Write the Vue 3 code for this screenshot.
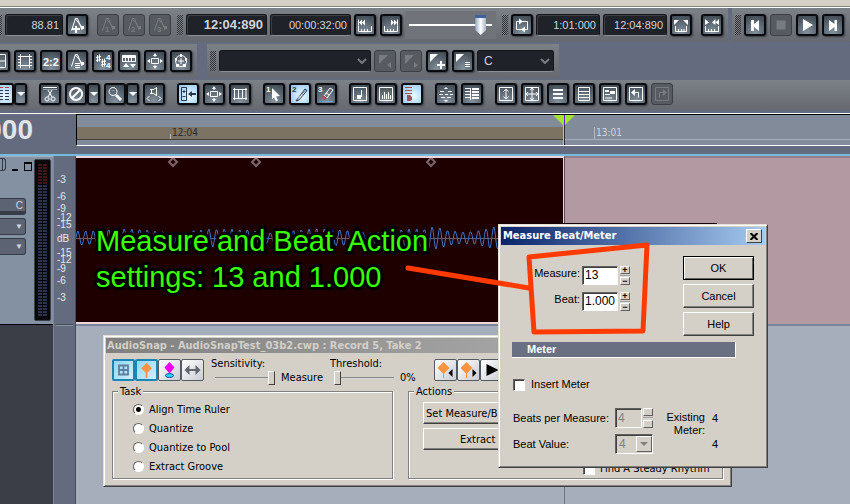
<script setup>
import { ref, h } from 'vue'

const metro = { s: 'M2.5 13.5L6.5 1.5H8.5L13 13M6 1.5L13 10', f: 'M12 9h3v3h-3z' }
const frame = 'M1.5 1.5h13v13h-13z'
const icons = {
  metroPlus: { s: metro.s, f: metro.f + 'M6 9h2v2h3v2H8v3H6v-3H3v-2h3z' },
  metro1: { ...metro, t: [['1', 5, 15]] },
  metro2: { ...metro, t: [['2', 5, 15]] },
  metro3: { ...metro, t: [['3', 5, 15]] },
  metroList: { s: metro.s + 'M6 10.5h5M6 12.5h5M6 14.5h5', f: metro.f },
  rulerBack: { s: 'M1.5 9v5.5h13V9M4.5 12v2M7.5 12v2M10.5 12v2M1.5 2.5v6', f: 'M2 5.5l3-3v6zM5 5.5l3-3v6z' },
  rulerFwd: { s: 'M1.5 9v5.5h13V9M4.5 12v2M7.5 12v2M10.5 12v2M14.5 2.5v6', f: 'M14 5.5l-3-3v6zM11 5.5l-3-3v6z' },
  loop: { s: 'M5 4.5H2.5v8H10M6 12.5M11 12.5h2.5v-8H6', f: 'M5 1.5v6l4-3zM11 9.5v6l-4-3z' },
  rulerSpan: { s: 'M2.5 9v5.5h11V9M5.5 12v2M8.5 12v2M11 12v2', f: 'M1 3h5L1 8zM15 3h-5l5 5z' },
  rulerIn: { s: 'M1.5 9v5.5h13V9M4.5 12v2M7.5 12v2M10.5 12v2', f: 'M1 2l4 3.5L1 8zM8 5.5L11.5 2v6zM11.5 5.5L15 2v6z' },
  toStart: { f: 'M4 3h3v4l5-4v11l-5-4v4H4z' },
  stop: { f: 'M3.5 3.5h9v9h-9z' },
  play: { f: 'M4 2l10 6-10 6z' },
  toEnd: { f: 'M12 3H9.5v4L4 3v11l5.5-4v4H12z' },
  grid: { s: frame + 'M8 2v12M2 8h12' },
  strip: { s: 'M1 3.5h14M1 12.5h14M3.5 3v10M12.5 3v10M1 6.5h2M1 9.5h2M13 6.5h2M13 9.5h2M3.5 1v2M12.5 1v2M3.5 13v2M12.5 13v2' },
  ratio: { t: [['2:2', 0, 13, 11]] },
  sharps: { s: 'M2.5 2v7M4.5 1.5v7M1 4.5l5-1M1 7.5l5-1M7.5 6v8M9.5 5.5v8M6 9l5-1M6 12l5-1', t: [['4', 11, 7, 8], ['4', 11, 15, 8]] },
  keys: { s: 'M1.5 2.5h13v6h-13zM4.5 5v3M7.5 5v3M10.5 5v3', f: 'M2 14l3-4 3 4zM9 11h6l-3 4zM2 3h12v2H2z' },
  spread: { s: 'M4.5 5.5h7v5h-7zM8 1v3M8 12v3M1 8h2M13 8h2', f: 'M6 3l2-3 2 3zM6 13l2 3 2-3zM3 6L0 8l3 2zM13 6l3 2-3 2z' },
  orbit: { s: 'M8 2.5a5.5 5.5 0 1 0 .1 0M8 5v6M5 8h6', f: 'M7 1h2v3H7zM2 5h2v3H2zM12 5h2v3h-2zM3 11h3v3H3zM10 11h3v3h-3z' },
  swatchPrev: { f: 'M2 2h9L2 11zM14 9v6l-4-3z' },
  swatchNext: { f: 'M2 2h9L2 11zM11 9v6l4-3z' },
  swatchAdd: { f: 'M1 1h8L1 9zM11 8h2v3h3v2h-3v3h-2v-3H8v-2h3z' },
  swatchList: { f: 'M1 1h8L1 9z', s: 'M10 9.5h5M10 11.5h5M10 13.5h5' },
  lanes: { s: 'M4 4.5h4M4 7.5h4M4 10.5h4M4 13.5h4M10 4.5h4M10 7.5h4M10 10.5h4M10 13.5h4', s2: 'M4 1.5h4M10 1.5h4' },
  cut: { s: 'M1 1.5h14M6 4l4 7M10 4l-4 7M5 11a2 2 0 1 0 .1 0M11 11a2 2 0 1 0 .1 0', g: 'M1 3.5h14' },
  mute: { s: 'M8 2a6 6 0 1 0 .1 0M12 4l-8 8', w: 2 },
  zoom: { s: 'M6 1.5a4 4 0 1 0 .1 0', f: 'M8 10l2-2 5 5-2 2z', g: 'M4.5 4.5h3' },
  scrub: { s: 'M5.5 3.5v4M4 3.5h3.5l3-2v8l-3-2H4M10.500 1v9M3.5 10L1 12.5 3.5 15M12.5 10l2.5 2.5-2.5 2.5' },
  snap: { s: 'M1.500 1.5h5v13h-5zM4 4v3M2.5 5.5h3M2.5 10.5h3', f: 'M8 8l4-3v2h4v2h-4v2z' },
  film: { s: 'M1 3.5h14M1 12.5h14M2.5 2v12M6.5 4v8M10.500 4v8M14 2v12' , s3: 1 },
  select: { f: 'M6 2l8 8-4 .5 2 4-2 1-2-4-2 2z', t: [['1', 0, 6]] },
  draw: { s: 'M5 13.5L13 3l2 1.5-8 9.5-3 1z', t: [['2', 0, 6]], g: 'M6 12l8-8' },
  erase: { s: 'M6 10L12 2l3 2-6 8zM8 7l4 2', r: 'M5 9l4 3-2 2-4-3z', t: [['3', 0, 6]], b: 'M1 15.5h2M4 15.5h2M7 15.5h8' },
  note: { s: frame + 'M9.5 4v7', f: 'M5 9h4v4H5z' },
  bars: { s: frame + 'M4.5 9v4M6.5 6v7M8.5 8v5M10.5 6v7M12.5 9v4' },
  mixLanes: { r: 'M1 1h7v1H1zM1 4h7v1H1zM1 7h7v1H1zM3 9h3l2 2v3l-2 1H3z' },
  center: { s: 'M2 5.5h4M10 5.5h4M1 8.5h4M7 8.5h3M12 8.5h3M3 11.5h4M9 11.5h4', f: 'M8 1l2 2H6zM8 16l2-2H6z' },
  brackets: { s: 'M1 2.5h6M1 5.5h6M1 8.5h6M1 11.5h6M6.5 2v12', f: 'M8 2h7v2H8zM8 5h7v2H8zM8 8h7v2H8zM8 11h7v2H8z' },
  fitV: { s: frame + 'M8 3v10M5.5 5.5L8 3l2.5 2.5M5.5 10.5L8 13l2.5-2.5' },
  fitAll: { s: frame + 'M8 2v12M2 8h12M6 4l2-2 2 2M6 12l2 2 2-2M4 6L2 8l2 2M12 6l2 2-2 2' },
  rows: { f: 'M3 3h10v2H3zM3 7h10v2H3zM3 11h10v2H3z' },
  rowsBox: { s: 'M2.5 1.5h11v13h-11zM3 5.5h10M3 8.5h10M3 11.5h10' },
  stepBox: { s: frame + 'M3 8.5h5M3 12h7', f: 'M3 4h4v2H3zM8 5h5v3H8z' },
  undo: { s: frame + 'M5 6.5h5.5v5', f: 'M3 6.5l4-3.5v7z' },
  redo: { s: frame + 'M11 6.5H5.5v5', f: 'M13 6.5L9 3v7z' },
  down: { f: 'M1 6h8l-4 4z' }
}

const Icon = (p) => {
  const i = icons[p.name]
  const parts = []
  const line = (d, c) => d && parts.push(h('path', { d, fill: 'none', stroke: c, 'stroke-width': i.w || 1 }))
  line(i.s, 'currentColor')
  line(i.g, '#8d969e')
  line(i.b, '#6ba2e0')
  line(i.s2, '#c0404a')
  if (i.f) parts.push(h('path', { d: i.f, fill: 'currentColor' }))
  if (i.r) parts.push(h('path', { d: i.r, fill: '#a8505a' }))
  for (const [c, x, y, size] of i.t || [])
    parts.push(h('text', { x, y, fill: 'currentColor', 'font-size': size || 8, 'font-weight': 700, 'font-family': 'Liberation Sans, sans-serif' }, c))
  return h('svg', { viewBox: p.name === 'down' ? '0 0 10 16' : '0 0 16 16', width: p.name === 'down' ? 10 : 16, height: 16, 'aria-hidden': 'true' }, parts)
}
Icon.props = ['name']

const viewTools = ['grid', 'strip', 'ratio', 'metroList', 'sharps', 'keys', 'spread', 'orbit']
const swatches = [['swatchPrev', 1], ['swatchNext', 1], ['swatchAdd', 0], ['swatchList', 0]]
const transport = [['toStart', 0], ['stop', 1], ['play', 0], ['toEnd', 0]]
// each tool: name, has menu, state
const editTools = [
  [['lanes', 1, 'on']],
  [['cut'], ['mute', 1], ['zoom', 1], ['scrub']],
  [['snap', 0, 'on'], ['spread'], ['film']],
  [['select'], ['draw', 0, 'on'], ['erase']],
  [['note'], ['bars'], ['mixLanes', 0, 'on']],
  [['center'], ['brackets']],
  [['fitV'], ['fitAll'], ['rows'], ['rowsBox'], ['stepBox'], ['undo'], ['redo', 0, 'off']]
]

const scale = [['-3', 24], ['-6', 41], ['-9', 53], ['-12', 62], ['-15', 69], ['dB', 83], ['-15', 97], ['-12', 104], ['-9', 113], ['-6', 125], ['-3', 142]]
const transients = [97, 180, 355]

let wave = 'M0 80'
for (let x = 1; x < 430; x++) {
  const amp = x < 24 ? 7 : x < 350 ? 5 + 4 * Math.abs(Math.sin(x / 31)) : 9 + 3 * Math.sin(x / 13)
  wave += `L${x} ${Math.round(80 - amp * Math.sin((x * Math.PI * 2) / 7.7))}`
}

const tasks = ['Align Time Ruler', 'Quantize', 'Quantize to Pool', 'Extract Groove']
const task = ref(tasks[0])
const measure = ref('13')
const beat = ref('1.000')
</script>

<template>
  <div class="app">
    <div class="menu-edge"></div>
    <header class="toolbars">
      <div class="row">
        <div class="panel tight">
          <span class="grip"></span>
          <output class="lcd tempo">88.81</output>
          <button class="tool" aria-label="Insert tempo"><Icon name="metroPlus" /></button>
          <div class="set apart">
            <button v-for="n in 3" :key="n" class="tool off" disabled :aria-label="'Tempo ' + n"><Icon :name="'metro' + n" /></button>
          </div>
          <span class="grip spaced"></span>
          <output class="lcd wide strong">12:04:890</output>
          <output class="lcd wide">00:00:32:00</output>
          <div class="set">
            <button class="tool" aria-label="Rewind"><Icon name="rulerBack" /></button>
            <button class="tool" aria-label="Forward"><Icon name="rulerFwd" /></button>
          </div>
          <input class="position" type="range" value="92" aria-label="Position" />
          <span class="grip spaced"></span>
          <button class="tool" aria-label="Loop"><Icon name="loop" /></button>
          <output class="lcd mid">1:01:000</output>
          <output class="lcd mid">12:04:890</output>
          <button class="tool" aria-label="Set loop"><Icon name="rulerSpan" /></button>
          <button class="tool apart" aria-label="Punch"><Icon name="rulerIn" /></button>
        </div>
        <div class="panel grow">
          <span class="grip"></span>
          <div class="set">
            <button v-for="[n, off] in transport" :key="n" class="tool" :class="{ off }" :disabled="!!off" :aria-label="n"><Icon :name="n" /></button>
          </div>
        </div>
      </div>
      <div class="row second">
        <div class="panel cut">
          <div class="set">
            <button v-for="n in viewTools" :key="n" class="tool" :aria-label="n"><Icon :name="n" /></button>
          </div>
        </div>
        <div class="panel">
          <span class="grip"></span>
          <div class="pick long">
            <select aria-label="Marker"><option></option></select>
            <svg viewBox="0 0 10 6" width="10" height="6"><path d="M1 1l4 4 4-4" /></svg>
          </div>
          <div class="set">
            <button v-for="[n, off] in swatches" :key="n" class="tool" :class="{ off }" :disabled="!!off" :aria-label="n"><Icon :name="n" /></button>
          </div>
          <div class="pick short">
            <select aria-label="Key"><option>C</option></select>
            <svg viewBox="0 0 10 6" width="10" height="6"><path d="M1 1l4 4 4-4" /></svg>
          </div>
        </div>
      </div>
      <div class="row">
        <div class="panel grow edit">
          <div v-for="(g, gi) in editTools" :key="gi" class="set">
            <div v-for="[n, menu, state] in g" :key="n" class="pair">
              <button class="tool" :class="state" :disabled="state === 'off'" :aria-label="n"><Icon :name="n" /></button>
              <button v-if="menu" class="tool slim" :aria-label="n + ' menu'"><Icon name="down" /></button>
            </div>
          </div>
        </div>
      </div>
    </header>

    <div class="timeline">
      <div class="now">000</div>
      <div class="ruler">
        <div class="band upper"></div>
        <div class="band beats">
          <span class="past"><i></i>12:04</span>
          <span class="next"><i></i>13:01</span>
        </div>
        <div class="band lower"></div>
        <svg class="head" viewBox="0 0 22 30" width="22" height="30"><path d="M0 0h22L11 11z" fill="#a4e234" /><path d="M11.5 0v10" stroke="#5a20e0" /><path d="M10.5 10v20" stroke="#a4e234" /><path d="M11.5 10v20" stroke="#2a3038" /></svg>
      </div>
    </div>

    <main class="workspace">
      <aside class="strip">
        <div class="track">
          <div class="controls">
            <div class="caps"><span class="stub"></span><span class="min"></span><span class="max"></span></div>
            <button class="slot c">C</button>
            <button class="slot">▼</button>
            <button class="slot">▼</button>
          </div>
          <div class="meter"><span></span><span></span></div>
        </div>
      </aside>
      <div class="scale">
        <span v-for="([t, y], i) in scale" :key="i" :style="{ top: y + 'px' }">{{ t }}</span>
      </div>
      <section class="clips">
        <div class="lane">
          <div class="clip">
            <svg width="486" height="162" viewBox="0 0 486 162">
              <path d="M0 80.5H486" stroke="#6b5a5e" />
              <path :d="wave" fill="none" stroke="#3a70c4" />
              <path v-for="x in transients" :key="x" :d="`M${x} 0l4 4-4 4-4-4z`" fill="none" stroke="#80626a" stroke-width="2" />
            </svg>
          </div>
          <div class="rest"></div>
        </div>
        <div class="empty"></div>
      </section>

      <section class="window snap">
        <h2>AudioSnap - AudioSnapTest_03b2.cwp : Record 5, Take 2</h2>
        <div class="snap-tools">
          <div class="flat-set">
            <button class="flat on" aria-label="Grid"><svg viewBox="0 0 20 20"><path d="M5 5h10v10H5zM10 5v10M5 10h10" fill="none" stroke="#5f7f9e" stroke-width="2" /></svg></button>
            <button class="flat on" aria-label="Marker"><svg viewBox="0 0 20 20"><path d="M10 2l6 6-6 6-6-6z" fill="#fa9440" /><path d="M10 13v6" stroke="#fa9440" stroke-width="2" /></svg></button>
            <button class="flat" aria-label="Pool"><svg viewBox="0 0 20 20"><ellipse cx="10" cy="15.5" rx="4" ry="2" fill="#20d8f8" stroke="#224a9c" /><path d="M10 2l5 5.5-5 6-5-6z" fill="#f000f0" /></svg></button>
            <button class="flat" aria-label="Stretch"><svg viewBox="0 0 20 20"><path d="M2 10l5-5v4h6V5l5 5-5 5v-4H7v4z" fill="#62666e" /></svg></button>
          </div>
          <div class="knob">
            <label for="sens">Sensitivity:</label>
            <div><input id="sens" type="range" value="100" /><span>Measure</span></div>
          </div>
          <div class="knob">
            <label for="thr">Threshold:</label>
            <div><input id="thr" type="range" value="0" /><span>0%</span></div>
          </div>
          <div class="flat-set far">
            <button class="flat" aria-label="Previous"><svg viewBox="0 0 20 20"><path d="M8 2l6 6-6 6-6-6z" fill="#fa9440" /><path d="M8 12v6" stroke="#fa9440" /><path d="M17 9v8l-4-4z" /></svg></button>
            <button class="flat" aria-label="Next"><svg viewBox="0 0 20 20"><path d="M8 2l6 6-6 6-6-6z" fill="#fa9440" /><path d="M8 12v6" stroke="#fa9440" /><path d="M14 9v8l4-4z" /></svg></button>
            <button class="flat" aria-label="Play"><svg viewBox="0 0 20 20"><path d="M5 4l12 6-12 6z" /></svg></button>
          </div>
        </div>
        <div class="groups">
          <fieldset class="task">
            <legend>Task</legend>
            <label v-for="t in tasks" :key="t"><input v-model="task" type="radio" name="task" :value="t" />{{ t }}</label>
          </fieldset>
          <fieldset class="actions">
            <legend>Actions</legend>
            <button class="push">Set Measure/B</button>
            <button class="push inset">Extract</button>
            <label class="steady"><input type="checkbox" class="box" />Find A Steady Rhythm</label>
          </fieldset>
        </div>
      </section>

      <div class="shade"></div>
      <section class="window dialog" role="dialog" aria-labelledby="dlg">
        <div class="caption">
          <h2 id="dlg">Measure Beat/Meter</h2>
          <button class="close" aria-label="Close"><svg viewBox="0 0 8 7" width="8" height="7"><path d="M.5 0l7 7M7.5 0l-7 7" stroke="#000" stroke-width="2" /></svg></button>
        </div>
        <div class="top">
          <div class="fields">
            <label for="m">Measure:</label>
            <input id="m" v-model="measure" type="text" />
            <span class="spin"><button aria-label="Measure up">+</button><button aria-label="Measure down">−</button></span>
            <label for="b">Beat:</label>
            <input id="b" v-model="beat" type="text" />
            <span class="spin"><button aria-label="Beat up">+</button><button aria-label="Beat down">−</button></span>
          </div>
          <div class="answers">
            <button class="push default">OK</button>
            <button class="push">Cancel</button>
            <button class="push">Help</button>
          </div>
        </div>
        <h3>Meter</h3>
        <label class="insert"><input type="checkbox" class="box" />Insert Meter</label>
        <div class="meter-form">
          <label for="bpm">Beats per Measure:</label>
          <div class="with-spin">
            <input id="bpm" type="text" value="4" disabled />
            <span class="spin dim"><button disabled aria-label="Up"></button><button disabled aria-label="Down"></button></span>
          </div>
          <span class="existing">Existing<br />Meter:</span>
          <span class="val">4</span>
          <label for="bv">Beat Value:</label>
          <div class="drop">
            <select id="bv" disabled><option>4</option></select>
            <span><svg viewBox="0 0 8 4" width="8" height="4"><path d="M0 0h8L4 4z" fill="#808080" /></svg></span>
          </div>
          <span class="val">4</span>
        </div>
      </section>

      <p class="note">Measure and Beat&nbsp; Action<br />settings: 13 and 1.000</p>
      <svg class="pointer" viewBox="0 0 260 100" width="260" height="100">
        <path d="M8 28L129 48M129 17L247 5 243 91 134 92z" />
      </svg>
    </main>
  </div>
</template>

<style>
body { background: #656b7f; }
</style>

<style scoped>
* { box-sizing: border-box; }
.app {
  --face: #d4d0c8;
  --base: #656b7f;
  --tahoma: "DejaVu Sans Condensed", "Noto Sans", sans-serif;
  display: flex;
  flex-direction: column;
  min-height: 100vh;
  overflow: hidden;
  background: var(--base);
  font: 11px/13px "Liberation Sans", sans-serif;
}
button, input, select, output { font: inherit; margin: 0; }
button { padding: 0; }
h2, h3, p { margin: 0; font-size: inherit; }
.menu-edge { height: 8px; background: var(--face); border-bottom: 1px solid #fff; box-shadow: inset 0 -1px #86847c; }

.toolbars { display: flex; flex-direction: column; gap: 2px; padding-bottom: 3px; border-bottom: 1px solid #fff; }
.row { display: flex; gap: 4px; }
.row.second { gap: 10px; }
.panel { display: flex; align-items: center; gap: 3px; padding: 6px 5px 6px 3px; background: linear-gradient(#7c8087, #666970); flex-shrink: 0; }
.panel.tight { padding-left: 0; }
.panel.tight > .grip:first-child { width: 2px; }
.panel.grow { flex: 1 0 auto; }
.panel.cut { margin-left: -12px; padding-left: 0; }
.panel.edit { gap: 12px; padding: 3px 0 5px; margin-left: -8px; }
.set { display: flex; gap: 4px; }
.pair { display: flex; }
.apart { margin-left: 6px; }
.grip { width: 6px; height: 20px; background: repeating-conic-gradient(#1a1c20 0 25%, #868a90 0 50%) 0 0 / 2px 2px; opacity: .8; }
.grip.spaced { margin-left: 3px; }
.tool { display: grid; place-items: center; width: 22px; height: 22px; flex-shrink: 0; color: #fff; border: 2px solid #090b0e; border-radius: 3px; background: radial-gradient(circle at 50% 90%, #84929d, #5a6671 55%, #3d464f); box-shadow: 1px 1px 2px #3a3d44; }
.tool svg { display: block; }
.tool.slim { width: 13px; }
.tool.on { color: #26384a; background: radial-gradient(circle at 60% 60%, #eef9ff, #8fc3ee); }
.tool.off { color: #777b82; border: 1px solid #3c3f45; background: #575a61; box-shadow: none; }
.lcd { height: 22px; padding: 0 3px; color: #d0d4dc; text-align: right; font: 11px/20px "Liberation Sans", sans-serif; background: #202229; border: 1px solid #14161a; border-bottom-color: #8a8e95; border-radius: 3px; box-shadow: inset 1px 1px 0 #3b3e45; }
.tempo { width: 58px; }
.wide { width: 81px; }
.strong { font: bold 13px/20px "Liberation Sans", sans-serif; }
.mid { width: 64px; }
.position { appearance: none; width: 91px; height: 28px; margin: -3px 0; padding: 0 4px; background: #707379; }
.position::-webkit-slider-runnable-track { height: 20px; background: linear-gradient(#fff, #fff) 0 9px / 100% 2px no-repeat; }
.position::-webkit-slider-thumb { appearance: none; width: 11px; height: 20px; background: linear-gradient(90deg, #8fa4bc, #fff 50%, #a8b6c6); border-top: 3px solid #3d64a0; clip-path: polygon(0 0, 100% 0, 100% 75%, 50% 100%, 0 75%); }
.pick { display: grid; align-items: center; }
.pick > * { grid-area: 1 / 1; }
.pick svg { justify-self: end; margin-right: 4px; fill: none; stroke: #777b84; stroke-width: 2; pointer-events: none; }
.pick select { appearance: none; width: 100%; height: 22px; padding: 0 6px; color: #d0d4dc; font: 12px/18px "Liberation Sans", sans-serif; background: #202229; border: 1px solid #14161a; border-bottom-color: #8a8e95; border-radius: 3px; }
.long { width: 152px; }
.short { width: 77px; }

.timeline { display: grid; grid-template-columns: 76px 1fr; height: 42px; border-bottom: 2px solid #76bcdc; flex-shrink: 0; }
.now { display: flex; justify-content: flex-end; color: #e2e4ea; font: bold 28px/32px "Liberation Sans", sans-serif; padding-right: 43px; }
.ruler { position: relative; align-self: start; display: flex; flex-direction: column; border: solid #000; border-width: 1px 0 1px 1px; border-bottom-color: #fff; background: #828b99; font: 10px/12px var(--tahoma); }
.upper { height: 12px; }
.lower { height: 5px; }
.beats { display: flex; height: 13px; }
.beats span { display: flex; }
.past { width: 486px; padding-left: 93px; color: #2c2926; background: #7c7362; border-bottom: 1px solid #45413a; }
.next { flex: 1; padding-left: 31px; color: #d0d5dd; border-bottom: 1px solid #a6afbb; }
.beats i { width: 1px; margin-right: 1px; background: #b5bac2; }
.past i { margin-top: 7px; }
.head { position: absolute; left: 476px; top: 0; }

.workspace { position: relative; flex: 1; display: grid; grid-template-columns: 53px 23px 1fr; min-height: 348px; }
.strip { background: #3b3e46; }
.track { display: flex; justify-content: space-between; height: 169px; padding: 2px 2px 0 0; background: #8391a3; border-bottom: 1px solid #000; border-top: 1px solid #a5afbb; }
.controls { width: 32px; }
.caps { display: flex; align-items: flex-end; height: 12px; gap: 6px; }
.stub { width: 6px; height: 13px; border: 1px solid #333944; border-left: 0; border-radius: 0 3px 3px 0; background: repeating-linear-gradient(90deg, #8391a3 0 2px, #333944 2px 3px); }
.min { width: 6px; height: 2px; background: #000; }
.max { width: 8px; height: 9px; border: 1px solid #000; border-top-width: 2px; }
.slot { display: block; width: 26px; height: 17px; margin-bottom: 3px; padding-right: 2px; text-align: right; font-size: 8px; color: #d3d7de; background: #5c6473; border: 1px solid #363b46; border-left: 0; border-radius: 0 3px 3px 0; }
.slot.c { margin-top: 27px; font-size: 10px; border-bottom-width: 4px; line-height: 9px; }
.meter { display: flex; gap: 1px; width: 17px; height: 162px; padding: 4px 3px; background: #07080c; border: 1px solid #3c4048; border-radius: 2px; }
.meter span { flex: 1; background: repeating-linear-gradient(transparent 0 2px, #07080c 2px 3px), linear-gradient(#451418 0 20px, #2a3350 20px); }
.scale { position: relative; border: solid #7d8798; border-width: 0 1px; border-right-color: #474b5c; }
.scale::after { content: ""; position: absolute; left: 2px; right: 2px; top: 168px; height: 2px; background: linear-gradient(#474b5c 50%, #8d94a4 50%); }
.scale span { position: absolute; left: 3px; color: #e4e6ea; font: 10px/12px "Liberation Sans", sans-serif; margin-top: -6px; }
.clips { display: flex; flex-direction: column; background: #a6aebb; min-width: 0; }
.lane { display: flex; height: 170px; border-bottom: 2px solid #77869a; }
.clip { width: 488px; flex-shrink: 0; background: #1e0000; border: solid #f1d4d8; border-width: 2px 1px 2px 0; }
.clip svg { display: block; }
.rest { flex: 1; background: #b399a1; border-left: 1px solid #5c4a58; border-top: 2px solid #917f8b; }
.empty { flex: 1; margin-left: 488px; border-left: 1px solid #6a7688; }

.window { position: absolute; background: var(--face); border: 1px solid; border-color: #e4e0d8 #404040 #404040 #e4e0d8; box-shadow: inset 1px 1px #fff, inset -1px -1px #808080; padding: 2px; }
.snap { left: 103px; top: 179px; width: 629px; height: 152px; font: 11px/13px var(--tahoma); }
.snap h2 { height: 15px; padding-left: 1px; color: #d4d0c8; font: bold 11px/15px var(--tahoma); background: linear-gradient(90deg, #808080, #b8b8b8); }
.snap-tools { display: flex; align-items: flex-start; padding: 4px 6px 0; }
.flat-set { display: flex; padding-top: 2px; }
.flat { width: 23px; height: 22px; border: 1px solid #545a64; border-radius: 2px; background: linear-gradient(135deg, #fff, #c9ccd4); }
.flat.on { border: 2px solid #1a84b4; background: linear-gradient(135deg, #8cd8fa, #d3effb); }
.flat svg { display: block; width: 100%; height: 100%; }
.knob { width: 119px; padding-left: 7px; }
.knob div { display: flex; align-items: center; gap: 6px; }
.knob input { appearance: none; width: 60px; height: 15px; margin-left: 4px; background: linear-gradient(#606060, #fff) 0 7px / 100% 2px no-repeat; }
.knob input::-webkit-slider-thumb { appearance: none; width: 7px; height: 14px; background: var(--face); border: 1px solid; border-color: #fff #404040 #404040 #fff; }
.far { margin-left: -8px; }
.groups { display: flex; gap: 15px; padding: 0 6px; }
fieldset { min-width: 0; margin: 0; height: 94px; padding: 0 14px; border: 1px solid #808080; box-shadow: inset 1px 1px #fff, 1px 1px #fff; }
legend { padding: 0 2px; margin-left: -9px; background: var(--face); }
.task { width: 281px; }
.task label { display: flex; align-items: center; gap: 5px; height: 19px; margin: 0 0 0 6px; }
.task legend + label { margin-top: 2px; }
.task input { appearance: none; width: 11px; height: 11px; border: 1px solid; border-color: #606060 #fff #fff #606060; border-radius: 50%; background: #fff; }
.task input:checked { background: radial-gradient(circle, #000 0 2px, #fff 3px); }
.actions { width: 315px; }
.push { display: block; border: 1px solid; border-color: #fff #404040 #404040 #fff; background: var(--face); box-shadow: inset -1px -1px #808080; color: #000; }
.actions .push { width: 200px; height: 22px; margin: 4px 0 0; padding-left: 2px; text-align: left; }
.actions .push.inset { padding-left: 36px; }
.box { appearance: none; width: 12px; height: 12px; flex-shrink: 0; background: #fff; border: 1px solid; border-color: #606060 #fff #fff #606060; box-shadow: inset 1px 1px #404040; }
.steady { display: flex; align-items: center; gap: 5px; margin: 12px 0 0 160px; white-space: nowrap; }

.shade { position: absolute; left: 497px; top: 67px; width: 220px; height: 1px; background: #140004; }
.dialog { left: 498px; top: 68px; width: 270px; height: 244px; }
.caption { display: flex; align-items: center; justify-content: space-between; height: 18px; padding: 0 3px 0 2px; background: linear-gradient(90deg, #0a246a, #a6caf0); }
.caption h2 { color: #fff; font: bold 11px/18px var(--tahoma); }
.close { display: grid; place-items: center; width: 16px; height: 14px; background: var(--face); border: 1px solid; border-color: #fff #404040 #404040 #fff; }
.top { display: flex; justify-content: space-between; padding: 11px 11px 0 0; }
.fields { display: grid; grid-template-columns: 79px 36px 10px; grid-auto-rows: 19px; gap: 7px 2px; padding-top: 10px; }
.fields label { text-align: right; padding-top: 1px; }
.fields label + input, .with-spin input { width: 100%; padding: 0 2px; background: #fff; border: 1px solid; border-color: #606060 #fff #fff #606060; box-shadow: inset 1px 1px #404040; font-size: 12px; }
.spin { display: flex; flex-direction: column; justify-content: space-between; background: linear-gradient(#808080, #fff) 0 9px / 100% 2px no-repeat; }
.spin button { height: 8px; font: bold 9px/6px "Liberation Sans", sans-serif; border: 1px solid; border-color: #fff #606060 #606060 #fff; background: var(--face); }
.spin.dim { margin-left: 1px; }
.answers { display: flex; flex-direction: column; gap: 4px; }
.answers .push { width: 71px; height: 24px; }
.answers .default { border-color: #000; box-shadow: inset 1px 1px #fff, inset -1px -1px #606060; }
.dialog h3 { height: 16px; margin: 6px 29px 0 11px; padding-left: 15px; color: #fff; background: #697081; border-right: 1px solid #fff; border-bottom: 1px solid #fff; font: bold 11px/15px "Liberation Sans", sans-serif; }
.insert { display: flex; align-items: center; gap: 6px; margin: 20px 0 0 12px; }
.meter-form { display: grid; grid-template-columns: 102px 38px 53px 20px; grid-template-rows: 20px 20px; row-gap: 6px; align-items: center; padding: 17px 0 0 12px; }
.with-spin { display: grid; grid-template-columns: 27px 11px; }
.meter-form .with-spin input { height: 20px; background: var(--face); color: #808080; }
.existing { grid-row: 1 / 3; grid-column: 3; align-self: start; padding-top: 3px; text-align: right; padding-right: 1px; }
.val { grid-column: 4; padding-left: 6px; }
.drop { display: grid; align-items: center; height: 20px; border: 1px solid; border-color: #606060 #fff #fff #606060; box-shadow: inset 1px 1px #404040; }
.drop > * { grid-area: 1 / 1; }
.drop select { appearance: none; width: 100%; border: 0; padding: 0 3px; background: none; color: #808080; font-size: 12px; opacity: 1; }
.drop span { justify-self: end; display: grid; place-items: center; width: 16px; height: 16px; background: var(--face); border: 1px solid; border-color: #fff #606060 #606060 #fff; }

.note { position: absolute; left: 96px; top: 67px; color: #37ff00; font: 29px/36px "Liberation Sans", sans-serif; white-space: nowrap; -webkit-text-stroke: 6px #000; paint-order: stroke fill; stroke-linejoin: round; }
.pointer { position: absolute; left: 400px; top: 84px; fill: none; stroke: #ff3a00; stroke-width: 5px; stroke-linecap: round; stroke-linejoin: round; pointer-events: none; }
</style>
